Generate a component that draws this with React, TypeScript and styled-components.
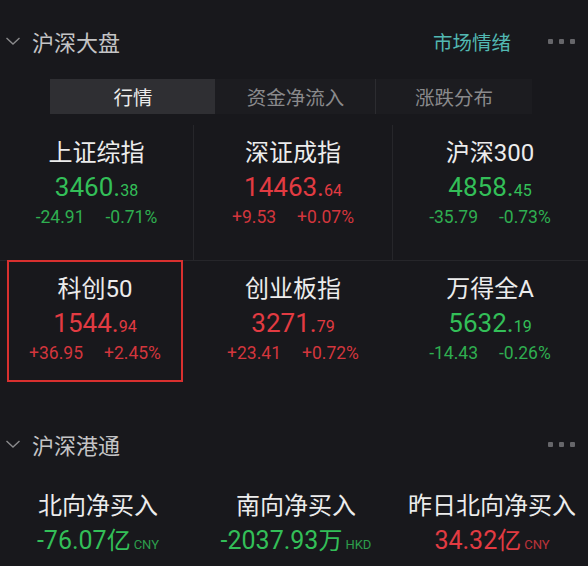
import React from 'react'
import styled, { createGlobalStyle } from 'styled-components'

const GlobalStyle = createGlobalStyle`
  html, body {
    margin: 0;
    padding: 0;
    background: #18181c;
  }
  body {
    font-family: Roboto, "Noto Sans CJK SC", sans-serif;
    -webkit-font-smoothing: antialiased;
  }
`

type Quote = {
  name: string
  int: string
  dec: string
  change: string
  pct: string
  up: boolean
  marked?: boolean
}

type Flow = {
  label: string
  value: string
  unit: string
  currency: string
  up: boolean
}

const quotes: Quote[] = [
  { name: '上证综指', int: '3460', dec: '38', change: '-24.91', pct: '-0.71%', up: false },
  { name: '深证成指', int: '14463', dec: '64', change: '+9.53', pct: '+0.07%', up: true },
  { name: '沪深300', int: '4858', dec: '45', change: '-35.79', pct: '-0.73%', up: false },
  { name: '科创50', int: '1544', dec: '94', change: '+36.95', pct: '+2.45%', up: true, marked: true },
  { name: '创业板指', int: '3271', dec: '79', change: '+23.41', pct: '+0.72%', up: true },
  { name: '万得全A', int: '5632', dec: '19', change: '-14.43', pct: '-0.26%', up: false },
]

const flows: Flow[] = [
  { label: '北向净买入', value: '-76.07', unit: '亿', currency: 'CNY', up: false },
  { label: '南向净买入', value: '-2037.93', unit: '万', currency: 'HKD', up: false },
  { label: '昨日北向净买入', value: '34.32', unit: '亿', currency: 'CNY', up: true },
]

const tabs = ['行情', '资金净流入', '涨跌分布']

const RED = '#e23b42'
const GREEN = '#33bf58'

const Page = styled.div`
  width: 588px;
  height: 566px;
  overflow: hidden;
  background: #18181c;
`

const SectionHeader = styled.div<{ $gap?: number }>`
  display: flex;
  align-items: center;
  height: 56px;
  margin-top: ${p => p.$gap ?? 13}px;
  padding: 0 13px 0 5px;
`

const Chevron = styled.svg`
  width: 16px;
  height: 10px;
  flex: none;
`

const Title = styled.div`
  margin-left: 11px;
  font-family: "Noto Sans CJK SC", sans-serif;
  font-size: 22px;
  color: #c4c4c6;
  flex: 1;
`

const Link = styled.div`
  font-family: "Noto Sans CJK SC", sans-serif;
  font-size: 19.5px;
  color: #52b8b2;
  margin-right: 37px;
`

const Dots = styled.div`
  display: flex;
  gap: 6px;
  span {
    width: 5px;
    height: 5px;
    border-radius: 1px;
    background: #66666a;
  }
`

const TabBar = styled.div`
  display: grid;
  grid-template-columns: 165px 160px 1fr;
  width: 482px;
  height: 35px;
  margin: 10px 0 0 50px;
  background: #1c1c20;
`

const Tab = styled.div<{ $active?: boolean; $divider?: boolean }>`
  display: flex;
  align-items: center;
  justify-content: center;
  font-family: "Noto Sans CJK SC", sans-serif;
  font-size: 19.5px;
  color: ${p => (p.$active ? '#ececec' : '#8a8a8c')};
  background: ${p => (p.$active ? '#2f2f33' : 'transparent')};
  border-left: 1px solid ${p => (p.$divider ? '#2c2c30' : 'transparent')};
`

const Grid = styled.div`
  display: grid;
  grid-template-columns: 194px 199px 1fr;
  grid-auto-rows: 136px;
  margin-top: 11px;
`

const Cell = styled.div<{ $row: number; $last: boolean }>`
  display: flex;
  border-right: 1px solid ${p => (p.$row === 0 && !p.$last ? '#26262a' : 'transparent')};
  border-bottom: 1px solid ${p => (p.$row === 0 ? '#26262a' : 'transparent')};
`

const QuoteBox = styled.div<{ $marked?: boolean }>`
  flex: 1;
  display: flex;
  flex-direction: column;
  align-items: center;
  margin: ${p => (p.$marked ? '-1px 10px 14px 7px' : '0')};
  padding-top: ${p => (p.$marked ? '12px' : '13px')};
  border: ${p => (p.$marked ? `2px solid #d8302f` : 'none')};
`

const Name = styled.div`
  font-family: Roboto, "Noto Sans CJK SC", sans-serif;
  font-size: 24px;
  line-height: 30px;
  color: #ececec;
`

const Price = styled.div<{ $up: boolean }>`
  margin-top: 2px;
  line-height: 34px;
  font-size: 26px;
  color: ${p => (p.$up ? RED : GREEN)};
  small {
    font-size: 16px;
  }
`

const Changes = styled.div<{ $up: boolean }>`
  display: flex;
  gap: 21px;
  margin-top: -3px;
  line-height: 24px;
  font-size: 17.5px;
  color: ${p => (p.$up ? '#d3363d' : '#2fae50')};
`

const FlowRow = styled.div`
  display: grid;
  grid-template-columns: 196px 200px 1fr;
  margin-top: 16px;
`

const FlowItem = styled.div`
  display: flex;
  flex-direction: column;
  align-items: center;
`

const FlowLabel = styled.div`
  font-family: "Noto Sans CJK SC", sans-serif;
  font-size: 24px;
  line-height: 32px;
  color: #ececec;
`

const FlowValue = styled.div<{ $up: boolean }>`
  margin-top: 1px;
  line-height: 36px;
  font-size: 25px;
  color: ${p => (p.$up ? RED : GREEN)};
  span {
    font-family: "Noto Sans CJK SC", sans-serif;
    font-size: 24px;
  }
  small {
    margin-left: 3px;
    font-size: 13px;
    opacity: 0.8;
  }
`

const Header: React.FC<{ title: string; link?: string; gap?: number }> = ({ title, link, gap }) => (
  <SectionHeader $gap={gap}>
    <Chevron viewBox="0 0 16 10">
      <polyline points="1.5,2 8,8 14.5,2" fill="none" stroke="#8a8a8c" strokeWidth="1.4" />
    </Chevron>
    <Title>{title}</Title>
    {link && <Link>{link}</Link>}
    <Dots>
      <span />
      <span />
      <span />
    </Dots>
  </SectionHeader>
)

export default function App() {
  return (
    <Page>
      <GlobalStyle />
      <Header title="沪深大盘" link="市场情绪" />
      <TabBar>
        {tabs.map((t, i) => (
          <Tab key={t} $active={i === 0} $divider={i === 2}>
            {t}
          </Tab>
        ))}
      </TabBar>
      <Grid>
        {quotes.map((q, i) => (
          <Cell key={q.name} $row={Math.floor(i / 3)} $last={i % 3 === 2}>
            <QuoteBox $marked={q.marked}>
              <Name>{q.name}</Name>
              <Price $up={q.up}>
                {q.int}.<small>{q.dec}</small>
              </Price>
              <Changes $up={q.up}>
                <span>{q.change}</span>
                <span>{q.pct}</span>
              </Changes>
            </QuoteBox>
          </Cell>
        ))}
      </Grid>
      <Header title="沪深港通" gap={19} />
      <FlowRow>
        {flows.map(f => (
          <FlowItem key={f.label}>
            <FlowLabel>{f.label}</FlowLabel>
            <FlowValue $up={f.up}>
              {f.value}
              <span>{f.unit}</span>
              <small>{f.currency}</small>
            </FlowValue>
          </FlowItem>
        ))}
      </FlowRow>
    </Page>
  )
}
